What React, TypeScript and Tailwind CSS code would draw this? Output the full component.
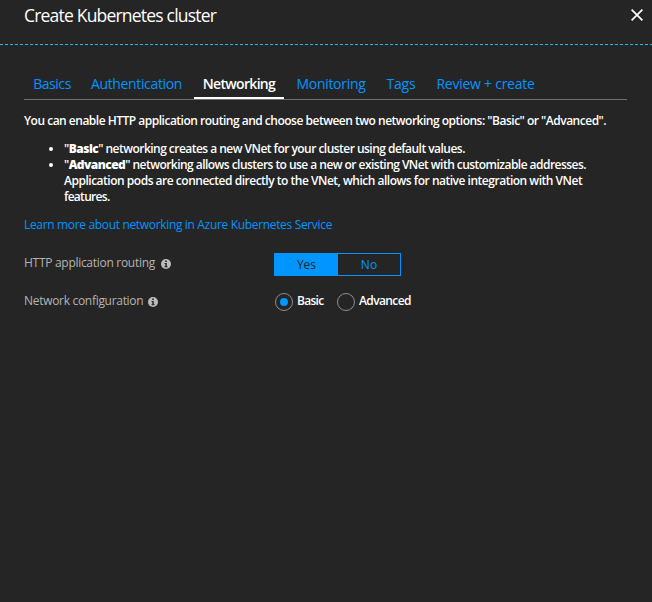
import React, { useState } from "react";

const tabs = [
  { label: "Basics", box: "w-[55px] tracking-[-0.45px] pl-px" },
  { label: "Authentication", box: "w-[109px] tracking-[-0.36px]" },
  { label: "Networking", box: "w-[90px] tracking-[-0.68px]" },
  { label: "Monitoring", box: "w-[88px] tracking-[-0.3px]" },
  { label: "Tags", box: "w-[46px] tracking-[-0.25px]" },
  { label: "Review + create", box: "w-[117px] tracking-[-0.25px]" },
];

function InfoIcon() {
  return (
    <svg width="10" height="10" viewBox="0 0 10 10" className="mt-[2px] shrink-0">
      <circle cx="5" cy="5" r="5" fill="#bcbcbc" />
      <path d="M4.2 1.6h1.6v1.5H4.2zM3.5 4h2.3v3.2h.8v1H3.5v-1h.8V5h-.8z" fill="#252525" />
    </svg>
  );
}

function Radio({ label, checked, onSelect, text }: { label: string; checked: boolean; onSelect: () => void; text: string }) {
  return (
    <button onClick={onSelect} className="flex h-[18px] items-center gap-[4px]">
      <span className="flex size-[18px] items-center justify-center rounded-full border border-[#8c8c8c]">
        {checked && <span className="size-[8px] rounded-full bg-[#0095ff]" />}
      </span>
      <span className={"-mt-[2px] whitespace-nowrap font-semibold leading-4 text-white " + text}>{label}</span>
    </button>
  );
}

export default function App() {
  const [tab, setTab] = useState("Networking");
  const [routing, setRouting] = useState(true);
  const [network, setNetwork] = useState("Basic");

  return (
    <div className="h-[602px] w-[652px] overflow-hidden bg-[#252525] font-['Open_Sans','Noto_Sans',sans-serif] text-[12px] leading-4 text-white">
      <header className="flex h-[44px] items-start justify-between pl-[24px] pr-[9px]">
        <h1 className="mt-[3px] whitespace-nowrap text-[17.5px] leading-6 tracking-[-0.8px]">Create Kubernetes cluster</h1>
        <button aria-label="Close" className="mt-[9px]">
          <svg width="12" height="12" viewBox="0 0 12 12" fill="none" stroke="#fff" strokeWidth="1.7">
            <path d="M.6.6l10.8 10.8M11.4.6L.6 11.4" />
          </svg>
        </button>
      </header>
      <div className="h-px bg-[repeating-linear-gradient(90deg,#20b9ee_0_3px,#252525_3px_5px)]" />

      <main className="pl-[24px] pr-[25px] pt-[27px]">
        <nav className="flex h-[28px] gap-[3px] border-b border-[#707070] text-[14px]">
          {tabs.map((t) => (
            <button
              key={t.label}
              onClick={() => setTab(t.label)}
              className={
                "flex h-[27px] justify-center whitespace-nowrap pt-[2px] leading-5 " +
                t.box +
                (t.label === tab ? " border-b-2 border-white font-semibold text-white" : " text-[#0095ff]")
              }
            >
              {t.label}
            </button>
          ))}
        </nav>

        <div className="font-semibold">
          <p className="mt-[13px] whitespace-nowrap tracking-[-0.496px]">
            You can enable HTTP application routing and choose between two networking options: "Basic" or "Advanced".
          </p>
          <ul className="mt-[12px] list-disc whitespace-nowrap pl-[40px]">
            <li className="tracking-[-0.53px]">
              "<b className="font-extrabold">Basic</b>" networking creates a new VNet for your cluster using default values.
            </li>
            <li>
              <span className="tracking-[-0.54px]">
                "<b className="font-extrabold">Advanced</b>" networking allows clusters to use a new or existing VNet with customizable addresses.
              </span>
              <br />
              <span className="tracking-[-0.485px]">
                Application pods are connected directly to the VNet, which allows for native integration with VNet
              </span>
              <br />
              <span className="tracking-[-0.7px]">features.</span>
            </li>
          </ul>
        </div>

        <a className="mt-[12px] block whitespace-nowrap tracking-[-0.335px] text-[#0095ff]">
          Learn more about networking in Azure Kubernetes Service
        </a>

        <div className="mt-[20px] flex h-[24px]">
          <div className="flex h-[20px] w-[250px] items-center gap-[6px] whitespace-nowrap text-[#b4b4b4]">
            <span className="tracking-[-0.29px]">HTTP application routing</span>
            <InfoIcon />
          </div>
          <div className="flex h-[23px] w-[127px] border border-[#0095ff]">
            <button
              onClick={() => setRouting(true)}
              className={"w-[63px] leading-[22px] " + (routing ? "bg-[#0095ff] text-[#252525]" : "text-[#0095ff]")}
            >
              Yes
            </button>
            <button
              onClick={() => setRouting(false)}
              className={"w-[62px] leading-[22px] " + (routing ? "text-[#0095ff]" : "bg-[#0095ff] text-[#252525]")}
            >
              No
            </button>
          </div>
        </div>

        <div className="mt-[14px] flex">
          <div className="flex h-[20px] w-[251px] items-center gap-[5px] whitespace-nowrap text-[#b4b4b4]">
            <span className="tracking-[-0.3px]">Network configuration</span>
            <InfoIcon />
          </div>
          <div className="mt-[2px] flex">
            <div className="w-[62px]">
              <Radio label="Basic" checked={network === "Basic"} onSelect={() => setNetwork("Basic")} text="tracking-[-0.7px]" />
            </div>
            <Radio label="Advanced" checked={network === "Advanced"} onSelect={() => setNetwork("Advanced")} text="tracking-[-0.62px]" />
          </div>
        </div>
      </main>
    </div>
  );
}
